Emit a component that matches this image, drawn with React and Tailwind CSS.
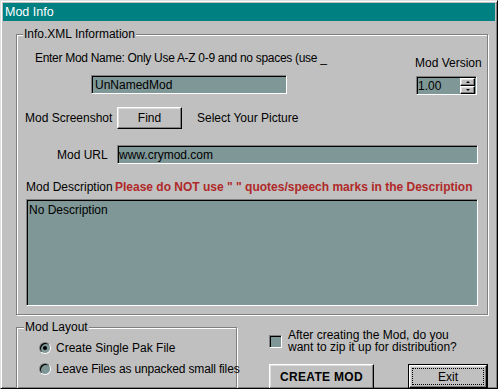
import React from "react";

const field =
  "border border-t-[#808080] border-l-[#808080] border-r-white border-b-white shadow-[inset_1px_1px_0_#000] bg-[#7f9797]";
const raised =
  "border border-t-white border-l-white border-r-black border-b-black shadow-[inset_-1px_-1px_0_#808080,inset_1px_1px_0_#dfdfdf] bg-[#c0c0c0]";
const etched =
  "border border-[#808080] shadow-[inset_1px_1px_0_#ffffff,1px_1px_0_#ffffff]";

function Radio({ checked }) {
  return (
    <div className="w-[12px] h-[12px] rounded-full border border-t-[#808080] border-l-[#808080] border-r-white border-b-white flex-none">
      <div className="w-full h-full rounded-full bg-[#7f9797] shadow-[inset_1px_1px_0_#000] flex items-center justify-center">
        {checked && <div className="w-[4px] h-[4px] rounded-full bg-black" />}
      </div>
    </div>
  );
}

export default function App() {
  return (
    <div className="w-[498px] h-[389px] overflow-hidden bg-[#c0c0c0] border border-t-[#dfdfdf] border-l-[#dfdfdf] border-r-black border-b-black shadow-[inset_1px_1px_0_#fff,inset_-1px_-1px_0_#808080] p-[2px] font-['Liberation_Sans',sans-serif] text-[12px] text-black leading-[14px]">
      <div className="h-[18px] bg-[#008080] text-white text-[12.5px] leading-[18px] pl-[2px] flex-none">
        Mod Info
      </div>

      {/* Group 1 */}
      <div className={`relative ml-[13px] mt-[13px] w-[472px] h-[281px] ${etched}`}>
        <div className="absolute top-[-8px] left-[6px] px-[1px] bg-[#c0c0c0] leading-[14px] whitespace-nowrap">
          Info.XML Information
        </div>
        <div className="flex flex-col">
          <div className="flex items-start">
            <div className="flex flex-col ml-[18px] mt-[16px]">
              <div className="h-[14px] tracking-[-0.3px] whitespace-nowrap">
                Enter Mod Name: Only Use A-Z 0-9 and no spaces (use _
              </div>
              <div className={`mt-[10px] ml-[56px] w-[196px] h-[19px] ${field} pl-[3px] flex items-center`}>
                UnNamedMod
              </div>
            </div>
            <div className="flex flex-col ml-auto mr-[8px] mt-[21px] w-[64px]">
              <div className="h-[14px] whitespace-nowrap">Mod Version</div>
              <div className={`mt-[6px] ml-[1px] w-[61px] h-[19px] ${field} pl-[1px] flex items-center`}>
                <span className="flex-1">1.00</span>
                <div className="flex flex-col mr-[1px] gap-0">
                  <div className={`w-[15px] h-[8px] ${raised} flex items-center justify-center`}>
                    <div className="w-0 h-0 border-l-[2px] border-r-[2px] border-b-[2px] border-l-transparent border-r-transparent border-b-black" />
                  </div>
                  <div className={`w-[15px] h-[8px] ${raised} flex items-center justify-center`}>
                    <div className="w-0 h-0 border-l-[2px] border-r-[2px] border-t-[2px] border-l-transparent border-r-transparent border-t-black" />
                  </div>
                </div>
              </div>
            </div>
          </div>

          <div className="flex items-center mt-[12px] h-[22px]">
            <div className="ml-[8px] w-[92px] whitespace-nowrap">Mod Screenshot</div>
            <div className={`w-[65px] h-[22px] ${raised} flex items-center justify-center`}>Find</div>
            <div className="ml-[15px] whitespace-nowrap">Select Your Picture</div>
          </div>

          <div className="flex items-center mt-[16px] h-[19px]">
            <div className="ml-[40px] w-[60px] whitespace-nowrap">Mod URL</div>
            <div className={`w-[361px] h-[19px] ${field} pl-[1px] flex items-center`}>www.crymod.com</div>
          </div>

          <div className="flex items-center mt-[16px] h-[14px]">
            <div className="ml-[9px] w-[89px] whitespace-nowrap">Mod Description</div>
            <div className="font-bold text-[#b02828] whitespace-nowrap">
              Please do NOT use " " quotes/speech marks in the Description
            </div>
          </div>

          <div className={`mt-[5px] ml-[9px] w-[452px] h-[107px] ${field} pl-[2px] pt-[3px]`}>
            No Description
          </div>
        </div>
      </div>

      {/* Bottom */}
      <div className="flex items-start mt-[12px]">
        <div className={`relative ml-[13px] w-[221px] h-[90px] ${etched} flex-none`}>
          <div className="absolute top-[-8px] left-[7px] px-[1px] bg-[#c0c0c0] whitespace-nowrap">Mod Layout</div>
          <div className="flex flex-col mt-[9px]">
            <div className="flex items-center h-[21px] ml-[22px] gap-[5px]">
              <Radio checked />
              <span className="whitespace-nowrap">Create Single Pak File</span>
            </div>
            <div className="flex items-center h-[21px] ml-[22px] gap-[5px]">
              <Radio />
              <span className="whitespace-nowrap tracking-[-0.15px]">Leave Files as unpacked small files</span>
            </div>
          </div>
        </div>

        <div className="flex flex-col ml-[32px]">
          <div className="flex items-center mt-[2px]">
            <div className="w-[13px] h-[13px] border border-t-[#808080] border-l-[#808080] border-r-white border-b-white flex-none">
              <div className="w-full h-full bg-[#7f9797] shadow-[inset_1px_1px_0_#000]" />
            </div>
            <div className="ml-[6px] leading-[12px] whitespace-nowrap">
              <div>After creating the Mod, do you</div>
              <div>want to zip it up for distribution?</div>
            </div>
          </div>
          <div className="flex mt-[11px]">
            <div className={`w-[105px] h-[25px] ${raised} flex items-center justify-center font-bold text-[12px] tracking-[0.3px]`}>
              CREATE MOD
            </div>
            <div className="ml-[34px] w-[80px] h-[25px] border border-black">
              <div className={`w-full h-full ${raised} p-[2px]`}>
                <div className="w-full h-full border border-dotted border-black flex items-center justify-center">
                  Exit
                </div>
              </div>
            </div>
          </div>
        </div>
      </div>
    </div>
  );
}
